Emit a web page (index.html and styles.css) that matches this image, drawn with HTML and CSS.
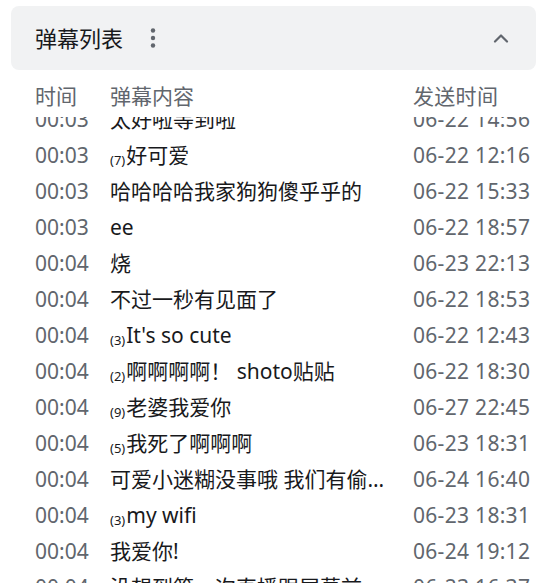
FILE: index.html
```html
<!DOCTYPE html>
<html lang="zh-CN">
<head>
<meta charset="utf-8">
<title>弹幕列表</title>
<link rel="stylesheet" href="styles.css">
</head>
<body>
<div class="panel">
  <div class="card">
    <div class="title">弹幕列表</div>
    <svg class="more" width="6" height="22" viewBox="0 0 6 22"><circle cx="3" cy="3.5" r="2.2"/><circle cx="3" cy="11" r="2.2"/><circle cx="3" cy="18.5" r="2.2"/></svg>
    <svg class="chev" width="16" height="10" viewBox="0 0 16 10"><path d="M2 8.5 L8 2.5 L14 8.5" fill="none" stroke-width="2.2" stroke-linecap="round" stroke-linejoin="round"/></svg>
  </div>
  <div class="row head"><span class="t">时间</span><span class="c">弹幕内容</span><span class="s">发送时间</span></div>
  <div class="viewport">
    <div class="list">
      <div class="row"><span class="t">00:03</span><span class="c">太好啦等到啦</span><span class="s">06-22 14:56</span></div>
      <div class="row"><span class="t">00:03</span><span class="c"><sub class="n">(7)</sub>好可爱</span><span class="s">06-22 12:16</span></div>
      <div class="row"><span class="t">00:03</span><span class="c">哈哈哈哈我家狗狗傻乎乎的</span><span class="s">06-22 15:33</span></div>
      <div class="row"><span class="t">00:03</span><span class="c">ee</span><span class="s">06-22 18:57</span></div>
      <div class="row"><span class="t">00:04</span><span class="c">烧</span><span class="s">06-23 22:13</span></div>
      <div class="row"><span class="t">00:04</span><span class="c">不过一秒有见面了</span><span class="s">06-22 18:53</span></div>
      <div class="row"><span class="t">00:04</span><span class="c"><sub class="n">(3)</sub>It's so cute</span><span class="s">06-22 12:43</span></div>
      <div class="row"><span class="t">00:04</span><span class="c"><sub class="n">(2)</sub>啊啊啊啊！ shoto贴贴</span><span class="s">06-22 18:30</span></div>
      <div class="row"><span class="t">00:04</span><span class="c"><sub class="n">(9)</sub>老婆我爱你</span><span class="s">06-27 22:45</span></div>
      <div class="row"><span class="t">00:04</span><span class="c"><sub class="n">(5)</sub>我死了啊啊啊</span><span class="s">06-23 18:31</span></div>
      <div class="row"><span class="t">00:04</span><span class="c">可爱小迷糊没事哦 我们有偷偷看你的</span><span class="s">06-24 16:40</span></div>
      <div class="row"><span class="t">00:04</span><span class="c"><sub class="n">(3)</sub>my wifi</span><span class="s">06-23 18:31</span></div>
      <div class="row"><span class="t">00:04</span><span class="c">我爱你!</span><span class="s">06-24 19:12</span></div>
      <div class="row"><span class="t">00:04</span><span class="c">没想到第一次直播跟屏幕前</span><span class="s">06-23 16:37</span></div>
    </div>
  </div>
</div>
</body>
</html>
```
FILE: styles.css
```css
html, body {
  margin: 0;
  padding: 0;
  background: #ffffff;
}
body {
  font-family: "Noto Sans", "Noto Sans CJK SC", sans-serif;
  overflow: hidden;
  height: 583px;
}
.panel {
  padding: 6px 12px 0 11px;
  display: flex;
  flex-direction: column;
  height: 583px;
  box-sizing: border-box;
}
.card {
  height: 64px;
  background: #f1f2f3;
  border-radius: 8px;
  display: flex;
  align-items: center;
  padding: 0 24px;
  flex: none;
}
.title {
  font-size: 22px;
  color: #18191c;
  line-height: 30px;
}
.more {
  margin-left: 27px;
  fill: #61666d;
}
.chev {
  margin-left: auto;
  margin-right: 3px;
  stroke: #61666d;
}
.row {
  display: grid;
  grid-template-columns: 75px 1fr 119px;
  align-items: center;
  height: 36px;
  line-height: 30px;
  padding-left: 24px;
  padding-right: 4px;
  font-size: 21px;
  white-space: nowrap;
}
.row.head {
  margin-top: 8px;
  flex: none;
}
.row .t, .row .s {
  color: #61666d;
}
.row .s {
  letter-spacing: 0.3px;
}
.row .c {
  color: #18191c;
  overflow: hidden;
  text-overflow: ellipsis;
  padding-right: 18px;
}
.row.head .c {
  color: #61666d;
}
.viewport {
  margin-top: 3px;
  flex: 1;
  overflow: hidden;
}
.list {
  margin-top: -16px;
}
.n {
  font-size: 13px;
  vertical-align: -2px;
  line-height: 1;
  color: #18191c;
  margin-right: 1px;
}
```
